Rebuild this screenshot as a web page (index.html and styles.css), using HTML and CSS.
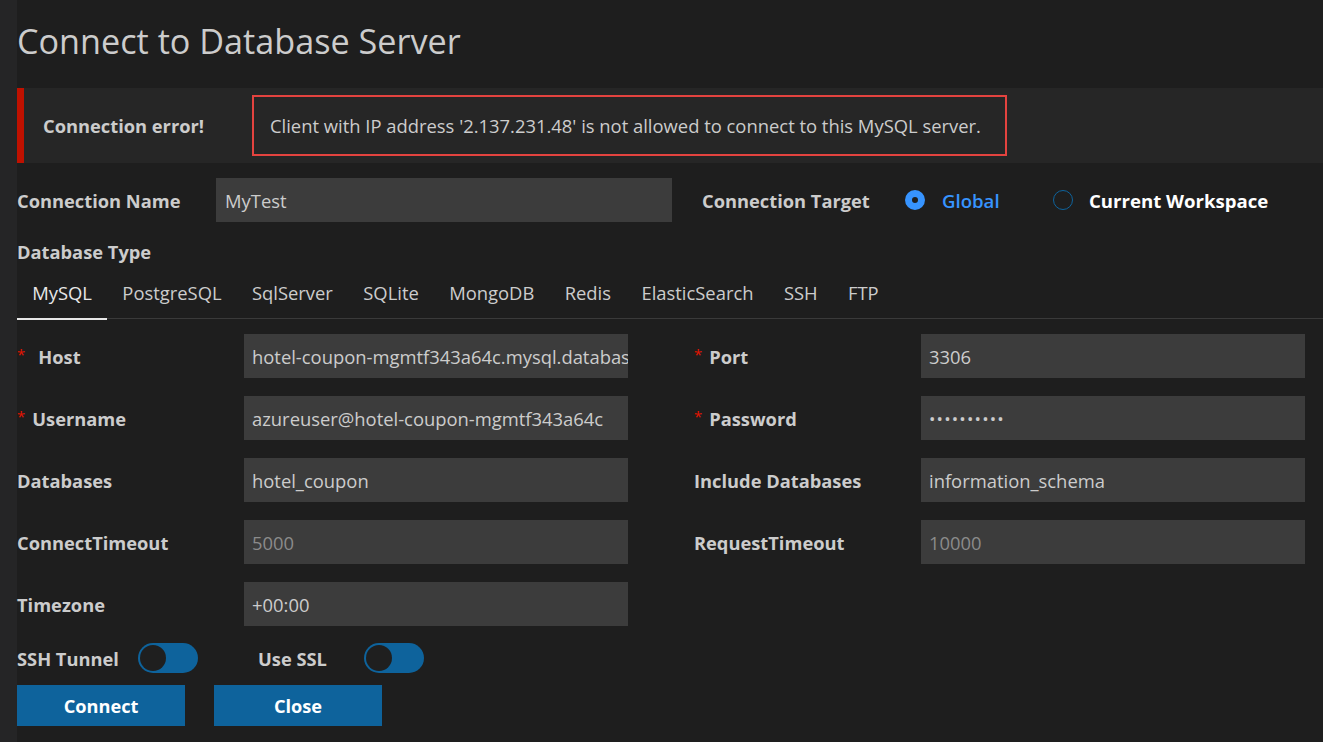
FILE: index.html
```html
<!DOCTYPE html>
<html>
<head>
<meta charset="utf-8">
<link rel="stylesheet" href="styles.css">
</head>
<body>
<div class="strip"></div>
<main class="main">
  <h1 class="title">Connect to Database Server</h1>
  <div class="banner">
    <span class="banner-label">Connection error!</span>
    <div class="error-box">Client with IP address '2.137.231.48' is not allowed to connect to this MySQL server.</div>
  </div>

  <div class="name-row">
    <span class="label name-label">Connection Name</span>
    <div class="input name-input">MyTest</div>
    <span class="label target-label">Connection Target</span>
    <span class="radio checked"></span>
    <span class="radio-text active">Global</span>
    <span class="radio"></span>
    <span class="radio-text">Current Workspace</span>
  </div>

  <div class="label section-label">Database Type</div>

  <div class="tabs">
    <span class="tab active">MySQL</span>
    <span class="tab">PostgreSQL</span>
    <span class="tab">SqlServer</span>
    <span class="tab">SQLite</span>
    <span class="tab">MongoDB</span>
    <span class="tab">Redis</span>
    <span class="tab">ElasticSearch</span>
    <span class="tab">SSH</span>
    <span class="tab">FTP</span>
  </div>

  <div class="form">
    <span class="label"><span class="req">*</span><span class="host-gap"></span>Host</span>
    <div class="input"><span class="clip">hotel-coupon-mgmtf343a64c.mysql.database.azure.com</span></div>
    <span></span>
    <span class="label"><span class="req">*</span>Port</span>
    <div class="input">3306</div>

    <span class="label"><span class="req">*</span>Username</span>
    <div class="input">azureuser@hotel-coupon-mgmtf343a64c</div>
    <span></span>
    <span class="label"><span class="req">*</span>Password</span>
    <div class="input pw">••••••••••</div>

    <span class="label">Databases</span>
    <div class="input">hotel_coupon</div>
    <span></span>
    <span class="label">Include Databases</span>
    <div class="input">information_schema</div>

    <span class="label">ConnectTimeout</span>
    <div class="input placeholder">5000</div>
    <span></span>
    <span class="label">RequestTimeout</span>
    <div class="input placeholder">10000</div>

    <span class="label">Timezone</span>
    <div class="input">+00:00</div>
  </div>

  <div class="toggles">
    <span class="label ssh-label">SSH Tunnel</span>
    <span class="toggle"><span class="knob"></span></span>
    <span class="label ssl-label">Use SSL</span>
    <span class="toggle"><span class="knob"></span></span>
  </div>

  <div class="buttons">
    <button class="btn">Connect</button>
    <button class="btn">Close</button>
  </div>
</main>
</body>
</html>
```

FILE: styles.css
```css
html, body {
  margin: 0;
  padding: 0;
  height: 100%;
}
body {
  background: #1e1e1e;
  display: flex;
  font-family: "Open Sans", "Noto Sans", sans-serif;
  color: #cccccc;
  overflow: hidden;
}
.strip {
  width: 17px;
  flex: none;
  background: #252526;
}
.main {
  flex: 1;
  min-width: 0;
}
.title {
  margin: 0;
  height: 88px;
  box-sizing: border-box;
  padding-top: 17px;
  font-size: 34.2px;
  font-weight: 400;
  line-height: 48px;
  color: #cccccc;
}
.banner {
  height: 75px;
  box-sizing: border-box;
  background: #262626;
  border-left: 7px solid #bf1100;
  display: flex;
  align-items: center;
}
.banner-label {
  font-weight: 700;
  font-size: 18.3px;
  margin-left: 19px;
  width: 209px;
  white-space: nowrap;
}
.error-box {
  width: 755px;
  height: 61px;
  box-sizing: border-box;
  border: 2px solid #e4433f;
  display: flex;
  align-items: center;
  padding-left: 16px;
  font-size: 18.4px;
  color: #cccccc;
  white-space: nowrap;
}
.label {
  font-weight: 700;
  font-size: 18.3px;
  color: #cccccc;
  white-space: nowrap;
}
.name-row {
  margin-top: 15px;
  height: 44px;
  display: flex;
  align-items: center;
}
.name-label {
  width: 199px;
}
.input {
  height: 44px;
  box-sizing: border-box;
  background: #3c3c3c;
  color: #cccccc;
  font-size: 18.4px;
  display: flex;
  align-items: center;
  padding-left: 8px;
  overflow: hidden;
  white-space: nowrap;
}
.clip {
  display: block;
  overflow: hidden;
  min-width: 0;
  flex: 1;
}
.name-input {
  width: 456px;
  padding-left: 9px;
}
.target-label {
  margin-left: 30px;
  width: 203px;
}
.radio {
  width: 20px;
  height: 20px;
  box-sizing: border-box;
  border-radius: 50%;
  border: 1px solid #0e639c;
  flex: none;
}
.radio.checked {
  border: 7px solid #3794ff;
  background: #1e1e1e;
}
.radio-text {
  font-weight: 700;
  font-size: 18.6px;
  color: #ffffff;
  margin-left: 16px;
  white-space: nowrap;
}
.radio-text.active {
  color: #3794ff;
  font-weight: 600;
  margin-left: 17px;
  width: 111px;
}
.section-label {
  margin-top: 18px;
  line-height: 24px;
}
.tabs {
  margin-top: 13px;
  height: 42px;
  box-sizing: border-box;
  border-bottom: 1px solid #3a3a3a;
  display: flex;
  align-items: stretch;
}
.tab {
  font-size: 18.4px;
  padding: 0 15.2px 10px;
  display: flex;
  align-items: center;
  color: #cccccc;
  box-sizing: border-box;
  border-bottom: 2px solid transparent;
  margin-bottom: -2px;
  white-space: nowrap;
}
.tab.active {
  color: #e7e7e7;
  border-bottom-color: #e7e7e7;
}
.form {
  margin-top: 15px;
  display: grid;
  grid-template-columns: 227px 384px 66px 227px 384px;
  grid-auto-rows: 44px;
  row-gap: 18px;
}
.form .label {
  display: flex;
  align-items: center;
}
.req {
  color: #e51400;
  font-weight: 400;
  font-size: 15px;
  line-height: 12px;
  align-self: flex-start;
  margin-top: 14px;
  margin-right: 7px;
}
.host-gap {
  width: 6px;
}
.pw {
  letter-spacing: 1.2px;
  font-size: 17px;
}
.placeholder {
  color: #8b8b8b;
}
.toggles {
  margin-top: 17px;
  height: 30px;
  display: flex;
  align-items: center;
}
.ssh-label {
  width: 110px;
}
.toggle {
  width: 60px;
  height: 30px;
  box-sizing: border-box;
  border-radius: 15px;
  background: #0e639c;
  padding: 2px;
  margin-left: 11px;
  display: flex;
}
.knob {
  width: 26px;
  height: 26px;
  border-radius: 50%;
  background: #1f1f1f;
}
.ssl-label {
  margin-left: 60px;
  width: 95px;
}
.buttons {
  margin-top: 12px;
  display: flex;
  gap: 29px;
}
.btn {
  width: 168px;
  height: 41px;
  border: none;
  background: #0e639c;
  color: #ffffff;
  font-family: "Open Sans", "Noto Sans", sans-serif;
  font-weight: 700;
  font-size: 18.2px;
  padding: 0;
}
```
